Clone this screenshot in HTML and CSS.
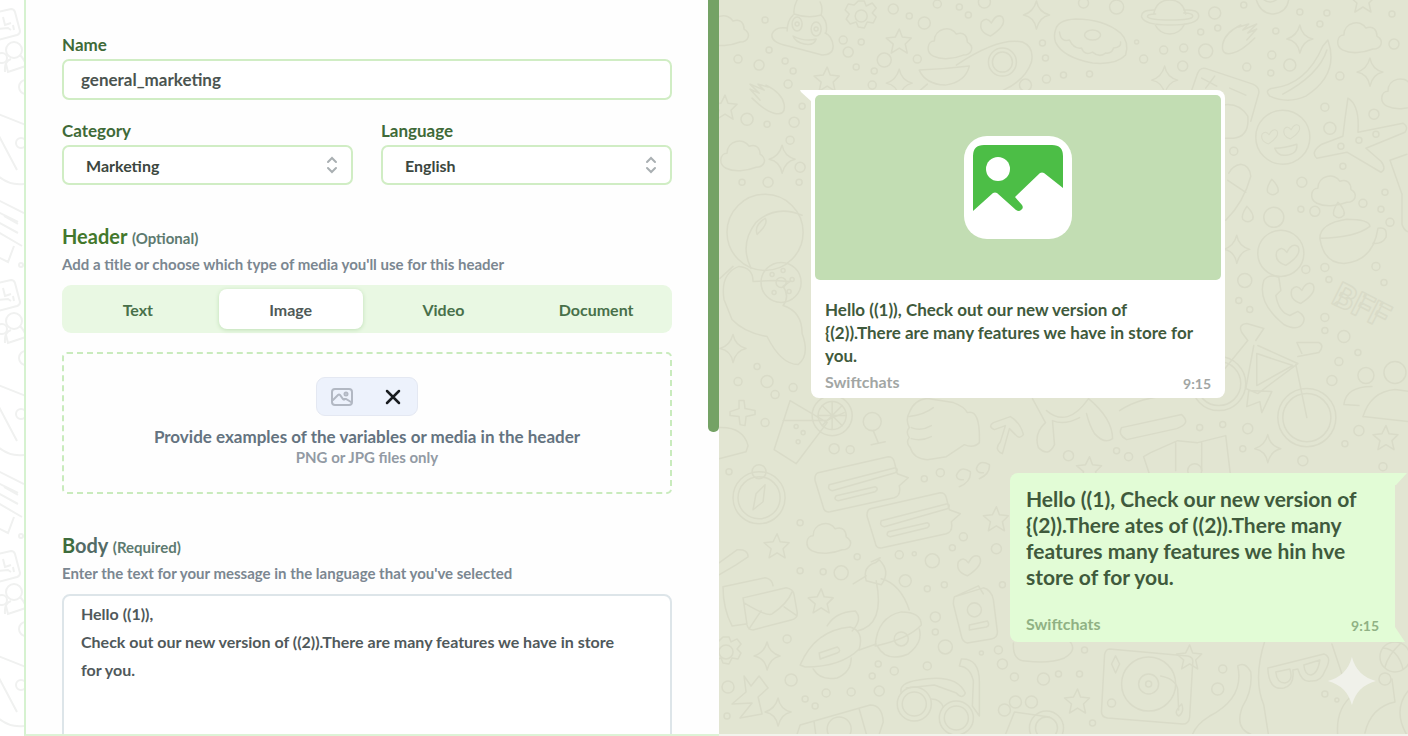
FILE: index.html
```html
<!DOCTYPE html>
<html lang="en">
<head>
<meta charset="utf-8">
<meta name="viewport" content="width=device-width, initial-scale=1">
<title>Message template</title>
<link rel="stylesheet" href="styles.css">
</head>
<body>
<main class="page">
  <div class="strip" aria-hidden="true">
    <svg class="strip-art" viewBox="0 0 24 736" preserveAspectRatio="xMinYMin slice">
      <defs>
        <g id="edge">
          <path d="M-2 12l13-3q3 0 4 3l5 19q0 3-3 4l-19 5M3 17l2 8 6-2M-2 29l10-1 3 2M13 25l1 5"/>
          <circle cx="14" cy="50" r="8"/><circle cx="2" cy="58" r="5"/>
          <path d="M5 72q-1-11 6-13M20 55q5 5 6 11l-18 6-2-8"/>
          <circle cx="26" cy="87" r="7"/>
          <path d="M-2 114l28 11M-2 134l19 36M-2 176q12 10 26 8M-2 200l26 13M-2 212l20 10M4 216l14 8M-2 222l20 11M-2 232l24 14M14 246l-6 16-10-5"/>
          <circle cx="21" cy="143" r="5"/><circle cx="21" cy="265" r="2"/>
        </g>
      </defs>
      <g class="edge-lines">
        <use href="#edge"/><use href="#edge" y="271"/><use href="#edge" y="542"/>
      </g>
    </svg>
  </div>

  <section class="editor">
    <form class="form">
      <div class="field">
        <label class="label" for="name">Name</label>
        <input class="control" id="name" type="text" value="general_marketing">
      </div>
      <div class="pair">
        <div class="field">
          <label class="label" for="category">Category</label>
          <div class="picker">
            <select class="control select" id="category"><option>Marketing</option></select>
            <svg class="arrows" viewBox="0 0 12 18" aria-hidden="true"><path d="M2 6l4-4 4 4M2 12l4 4 4-4"/></svg>
          </div>
        </div>
        <div class="field">
          <label class="label" for="language">Language</label>
          <div class="picker">
            <select class="control select" id="language"><option>English</option></select>
            <svg class="arrows" viewBox="0 0 12 18" aria-hidden="true"><path d="M2 6l4-4 4 4M2 12l4 4 4-4"/></svg>
          </div>
        </div>
      </div>

      <section class="group">
        <h2 class="heading">Header <small class="note">(Optional)</small></h2>
        <p class="hint">Add a title or choose which type of media you'll use for this header</p>
        <div class="tabs">
          <button class="tab" type="button">Text</button>
          <button class="tab tab-on" type="button" aria-pressed="true">Image</button>
          <button class="tab" type="button">Video</button>
          <button class="tab" type="button">Document</button>
        </div>
        <div class="drop">
          <div class="chip">
            <svg class="chip-image" viewBox="0 0 24 20" aria-hidden="true"><rect x="2" y="2" width="20" height="16" rx="3"/><path d="M3 13l5-5q1-1 2 0l3 4q1 1 2 0M14 12h2l5 3"/><circle cx="16" cy="7" r="1.5"/></svg>
            <button class="chip-close" type="button" aria-label="Remove"><svg class="cross" viewBox="0 0 16 16" aria-hidden="true"><path d="M2 2l12 12M14 2L2 14"/></svg></button>
          </div>
          <p class="drop-title">Provide examples of the variables or media in the header</p>
          <p class="drop-note">PNG or JPG files only</p>
        </div>
      </section>

      <section class="group">
        <h2 class="heading heading-body"><span class="initial">B</span>ody <small class="note">(Required)</small></h2>
        <label class="hint" for="body">Enter the text for your message in the language that you've selected</label>
        <textarea class="message" id="body">Hello ((1)),
Check out our new version of ((2)).There are many features we have in store
for you.</textarea>
      </section>
    </form>
    <div class="track"><div class="thumb"></div></div>
  </section>

  <section class="preview">
    <svg class="wall" viewBox="720 0 688 736" preserveAspectRatio="xMinYMin slice" aria-hidden="true">
      <defs>
        <path id="star" d="M0-12l3 8 9 1-6 6 2 9-8-5-8 5 2-9-7-6 9-1z"/>
        <path id="spark" d="M0-14Q2-3 13 0 3 2 0 14-2 2-13 0-3-3 0-14z"/>
        <path id="cloud" d="M-17 13c-8-4-6-15 1-15 0-13 17-16 22-7 8-3 11 3 11 8 8 5 4 13-4 13-10 4-22 5-30 1z"/>
        <path id="heart" d="M-2 11q-12-4-9-14 5-6 10 1 5-10 11-6 5 8-12 19z"/>
        <path id="drop" d="M-1-8q8 8 6 13-5 5-10 0-2-4 4-13z"/>
        <path id="gear" d="M-3-15h6l2 5 6-3 4 5-4 5 4 4-3 6-6-1-3 6-6-1-2-5-6 2-4-5 3-5-4-4 3-6 6 1z"/>
        <path id="comet" d="M-19 8q-2 12 10 9 9-2 22-15M-19 8q2-11 18-19M-3-9l10-3-6 6 14-6-9 9 9-4-10 11"/>
        <path id="note" d="M-38-10l70-16q5 0 6 5l3 12 11 4-9 8q2 10-5 12l-64 14q-6 1-7-5l-8-26q-1-6 3-8zM-27 2l66-17q4 2 0 5L-24 8q-5-1-3-6zM-20 13l39-9q4 2 0 5l-37 9q-5-1-2-5z"/>
      </defs>
      <g class="doodles">
        <use href="#cloud" x="728" y="30"/><use href="#cloud" x="951" y="43"/><use href="#cloud" x="744" y="155"/><use href="#cloud" x="1360" y="37"/><use href="#cloud" x="1404" y="93"/><use href="#cloud" x="1334" y="190"/><use href="#cloud" x="830" y="537"/>
        <use href="#gear" x="862" y="16"/><use href="#gear" x="727" y="651"/>
        <use href="#heart" x="993" y="25"/><use href="#heart" x="970" y="564"/><use href="#heart" x="1303" y="292"/>
        <use href="#star" x="900" y="41"/><use href="#star" x="828" y="79"/><use href="#star" x="726" y="107"/><use href="#star" x="1363" y="0"/><use href="#star" x="1386" y="437"/><use href="#star" x="1090" y="468"/><use href="#star" x="778" y="545"/><use href="#star" x="997" y="518"/><use href="#star" x="822" y="600"/><use href="#star" x="1190" y="656"/><use href="#star" x="1078" y="700"/>
        <use href="#spark" x="1037" y="15"/><use href="#spark" x="900" y="83"/><use href="#spark" x="783" y="159"/><use href="#spark" x="1300" y="39"/><use href="#spark" x="1370" y="72"/><use href="#spark" x="1165" y="80"/><use href="#spark" x="734" y="348"/><use href="#spark" x="1237" y="249"/><use href="#spark" x="1268" y="448"/><use href="#spark" x="768" y="655"/><use href="#spark" x="779" y="711"/>
        <use href="#comet" x="1242" y="36"/><use href="#comet" transform="translate(766 96) scale(-1 1)"/>
        <use href="#drop" x="1273" y="187"/><use href="#drop" x="1248" y="214"/><use href="#drop" x="1339" y="210"/>
        <use href="#note" x="857" y="482"/><use href="#note" x="909" y="518"/>

        <path d="M798 0q-4 8-3 14M821 2q3 6 1 13M795 14q14 5 27 1M794 15q-6 6-6 16M822 15q7 7 5 17M788 28q-12-2-15 6-2 8 16 12l34 9q11 0 11-9-1-10-8-13M794 36q12 6 23 3-2 7-12 5-9-2-11-8z"/>
        <ellipse cx="798" cy="24" rx="5" ry="7"/><ellipse cx="817" cy="29" rx="5" ry="7"/><circle cx="798" cy="24" r="2"/><circle cx="817" cy="29" r="2"/><circle cx="862" cy="16" r="6"/><circle cx="727" cy="651" r="7"/>
        <path d="M957 65q42-28 66-23 12 5 9 20-6 18-28 28M920 70q26-1 50-4-4 16-24 19-20-1-26-15M928 84l-8 7"/><circle cx="1003" cy="62" r="14"/><circle cx="1003" cy="62" r="10"/>
        <circle cx="766" cy="232" r="38"/><path d="M752 268q-12-24 5-46 20-18 46-7M758 234q-3-9 8-16 4 5-8 16z"/>
        <path d="M1056 30q2-10 20-11 28 0 45 14 9 9 5 22-9 10-33 8-30-6-37-21-2-6 0-12zM1060 32q1 10 10 8 4 9 12 8 3 8 11 4 7 6 13 1 6 1 8-5 8-1 7-6"/><ellipse cx="1093" cy="35" rx="8" ry="5"/>
        <path d="M1154 14q3-14 16-14t16 14M1155 24q5 10 15 10t15-10M1154 10q-13 0-12 7 3 8 28 8 29 0 29-9 0-7-15-6M1156 14q-9 0-8 3 3 3 22 3 24 0 23-4 0-3-9-3"/>
        <path d="M1256-2q4 16 18 16 14-2 15-16M1262-2q8 8 17 0"/>
        <path d="M1328 40q12 34-22 56-18 8-36 0-6-6 3-8 33-3 50-42zM1327 50q-8 25-44 44M1192 90l6-17q3-7 10-4l45 15q7 3 6 9l-8 28M1218 106q20-6 30 10 2 20-14 22h-10M1202 78l15 8M1215 76l-9 12M1230 88l16 7"/>
        <circle cx="1283" cy="137" r="27"/><path d="M1275 148q9 0 22-4 1 10-11 11-8 1-11-7z"/><use href="#heart" transform="translate(1270 136) scale(.7)"/><use href="#heart" transform="translate(1292 131) scale(.7)"/>
        <path d="M1348 98q-3 20-5 38l-21 8q-12 8-5 14l30-6 34 20q6-3 0-11l-15-13 39-16q4-5-2-9l-45 9q2-27-10-34zM1390 160l17-6M1390 160l12 34v30q2 7 8 8M1226 220q18-18 25-44-1-11-10-12-8 1-12 9M1228 180l18 12M1320 238q0-15 27-19 22 0 23 7-14 11-50 12q4 25 24 25 29-2 34-35 10-2 8 9-4 7-13 6"/>
        <circle cx="1274" cy="217" r="10"/><circle cx="1281" cy="253" r="23"/><use href="#heart" x="1288" y="254"/>

        <path d="M740 266q-19 7-15 33l8 20q12 13 35 17 14 28 31 28 12-9 4-31 0-22-19-28 7-9 0-19l7-5-16-1-21 1q0-14-14-15M721 278l13-12"/><circle cx="782" cy="282" r="20"/><circle cx="782" cy="282" r="5"/><circle cx="773" cy="274" r="2"/><circle cx="784" cy="270" r="2"/><circle cx="793" cy="279" r="2"/><circle cx="790" cy="291" r="2"/><circle cx="775" cy="292" r="2"/>
        <path d="M740 400h5l1 8 10 2v4l-9 2-1 9-5-1-1-8-9-1v-4l9-3zM720 427q24-1 29 18l-2 6-27 7M791 400l-16 49 22 14 31-41zM784 420h43l18-8"/><circle cx="797" cy="426" r="2"/><circle cx="804" cy="432" r="2"/><circle cx="799" cy="441" r="2"/>
        <circle cx="833" cy="415" r="20"/><circle cx="833" cy="415" r="14"/><path d="M833 401v28M819 415h28M823 405l20 20M823 425l20-20"/>
        <circle cx="873" cy="421" r="9"/><path d="M874 430l5 12M872 444l14-3M910 412q5-13 18-14l26 4q11 4 14 10 13-4 12 30-6 6-15 2l-18 12-19 3q-14-1-17-12-5-5-1-10-4-6 0-10-4-8 0-15zM910 416q15-2 24-9M912 427q10 4 20-2M912 438q10 3 20-2M1003 453q-9-4-2-12l5-16-11 4q-7-3-1-7l17-6q10 6 13 18-4 5-8 0l-6-6zM1033 398l13 24q-12 11-7 25 10 10 16-3l-2-24q12 5 27-3M1047 410q21 18 42-12M1089 398q24 20 24 40-8 6-18-5-5-8-8-20M1120 410q22-14 50-14M1122 427l60-13q10 9-5 14l-50 11q-9-5-5-12M1151 452l27-12 20 2 28-7 5 42-80 0-7-21zM1176 442v28M1202 442v28"/><circle cx="1195" cy="470" r="7"/>

        <path d="M1264 280q5-7 15-3l2 13-5 5q3 17 14 20l8-4q9 5 5 12-5 8-19 1-27-22-20-44zM1307 417l-11-53M1213 383l35-43-6-8q-4-8 5-9l17 5-8 12M1258 345l40 18-40 30-12-5 8-43M1257 353v32l36-20zM1249 390l-2 16 13-5 2 11 10-21zM1298 356l21-4q6-7 0-10h-22l5 11"/>
        <circle cx="1307" cy="417" r="29"/><circle cx="1307" cy="417" r="24"/><circle cx="1219" cy="383" r="27"/><circle cx="1219" cy="383" r="22"/>
        <text class="bff" x="1330" y="302" transform="rotate(27 1330 302)">BFF</text>
        <circle cx="1366" cy="375" r="8"/><circle cx="1395" cy="372" r="11"/><path d="M1363 416q8-25 32-27l15 2M1363 416l47 5M1344 404q2-18 28-18M1344 404l15 1"/>

        <circle cx="760" cy="497" r="26"/><circle cx="760" cy="497" r="21"/><circle cx="760" cy="471" r="7"/><path d="M766 484l-2 17-10 8 3-16zM960 486q12-5 11-15-10-7-14 4 1 5 7 4M980 478q11-5 10-14-10-6-13 4 1 5 7 4M720 562l18-13q11-1 11 7l-12 8-17 10M724 586l42-9q7 1 8 8M724 586q0 22 9 39l14-2M744 597l43-10q7 1 8 7l3 17q1 7-6 8l-38 10q-5 0-6-5zM745 602q23 14 28 11 15-10 20-22M750 628l12-18M798 615l-13-9"/>
        <path d="M801 664q15-35 50-38 14 4 9 22-18 18-54 18zM820 652l18-6q5 4 0 6l-17 6zM828 625q8-14 28-15 8 8-3 20M877 580q9 44-19 50M882 578q19 5 28 31M876 645q2-29 26-34 20 0 20 13-13 14-46 21M860 649l17-6M876 562q-13 4-9 18l15 4q10-13-2-25zM867 575l-13 8M872 561l9-4"/><path d="M814 668q7 12 24 9 14-6 14-20M878 645q9 17 31 8 15-12 11-25"/><circle cx="902" cy="638" r="7"/>
        <path d="M955 596l29-9q8 2 10 12l4 32q0 6-6 7l-24 4q-5-1-6-7l-8-32q0-4 1-7l24-11 5 8"/><circle cx="975" cy="609" r="7"/><path d="M970 624l18-4q3 5-1 6l-17 3z"/>
        <circle cx="915" cy="703" r="17"/><circle cx="915" cy="703" r="12"/><circle cx="957" cy="717" r="17"/><circle cx="957" cy="717" r="12"/><path d="M902 692q-3-10 17-13 38-7 47 13-3 7-9 0l-22-8-28 3M932 698q9 0 12 8M962 658q18-1 18 23v34l-7-10 1-25q-3-14-14-15zM797 736l4-12 70-20q12 0 13 17l-5 15M815 721l2 15M860 708l8 28"/><circle cx="840" cy="728" r="12"/>
        <path d="M745 675l7 10 8-10 9 12-10 9 4 17-22 4 12-15-20 1 14-12zM1005 736l10-25 35 5"/><circle cx="1005" cy="709" r="6"/><circle cx="1016" cy="701" r="6"/><circle cx="1032" cy="701" r="6"/><circle cx="1047" cy="727" r="17"/><circle cx="1047" cy="727" r="11"/>
        <path d="M1014 642q-1 18 12 18 24 3 39-3 14-8 4-18M1110 648l78 7q6 1 5 7l-3 54q-1 7-7 7l-75-6q-7-1-6-8l3-55q1-6 5-6zM1112 663l4-8 4 8-4 9zM1161 675q15 3 17 13l1 21M1182 703q-9 9-3 12 6-4 3-12"/><circle cx="1149" cy="683" r="27"/><circle cx="1149" cy="683" r="10"/><circle cx="1149" cy="683" r="3"/>
        <path d="M1192 736q3-12 18-21 35-18 28-50 7-5 13 6 2 18-8 34-12 30 24 31M1265 640q-12 38-1 64l5 32M1268 667l56-14q9 3 1 17-4 11-14 10-9 2-13-12l-5 1q2 15-9 18-15 3-16-20zM1276 671l14-3q4 12-5 14-8 0-9-11zM1304 664l16-5q-2 14-9 15-6 0-7-10zM1332 643l10 30M1338 736q-3-28 15-42M1365 732q6-26 30-31l-3-23M1408 690q-16 20 0 46"/><circle cx="1395" cy="656" r="15"/><path d="M1383 647q15 1 20 21M1401 642q-13 12-16 24"/>
      </g>
      <g class="doodles" id="bubbles"></g>
      <path class="glint" d="M1352 656Q1357 675 1376 680 1357 685 1352 704 1347 685 1328 680 1347 675 1352 656z"/>
    </svg>

    <div class="chat">
      <article class="bubble bubble-in">
        <svg class="tail tail-in" viewBox="0 0 12 12" aria-hidden="true"><path d="M0 0h12v12L1 2z"/></svg>
        <div class="media">
          <svg class="photo" viewBox="0 0 108 103" role="img" aria-label="Image"><rect class="photo-card" width="108" height="103" rx="23"/><path class="photo-scene" d="M9 75V20Q9 9 20 9h68q11 0 11 11v32L80 37q-2-1-4 0L51 61l7 8q2 3-1 5-2 2-5 0L33 57q-2-1-4 0z"/><circle class="photo-card" cx="34" cy="33" r="12"/></svg>
        </div>
        <p class="text">Hello ((1)), Check out our new version of<br>{(2)).There are many features we have in store for<br>you.</p>
        <footer class="meta"><span>Swiftchats</span><time class="time">9:15</time></footer>
      </article>

      <article class="bubble bubble-out">
        <svg class="tail tail-out-top" viewBox="0 0 13 13" aria-hidden="true"><path d="M0 0h12L1 12H0z"/></svg>
        <svg class="tail tail-out-bottom" viewBox="0 0 13 15" aria-hidden="true"><path d="M0 0l10 15H0z"/></svg>
        <p class="text text-large">Hello ((1), Check our new version of<br>{(2)).There ates of ((2)).There many<br>features many features we hin hve<br>store of for you.</p>
        <footer class="meta meta-out"><span>Swiftchats</span><time class="time">9:15</time></footer>
      </article>
    </div>
  </section>
</main>
<script src="bubbles.js"></script>
</body>
</html>
```
FILE: bubbles.js
```js
// Small rings scattered between the larger doodles: x, y, radius.
const rings = [
  [766,20,3],[894,9,5],[910,16,3],[925,23,6],[938,4,4],[960,7,3],[969,15,3],[985,2,6],[844,40,4],[862,42,3],[849,52,5],
  [770,50,3],[739,59,4],[760,65,5],[786,61,3],[794,71,3],[789,84,4],[857,67,3],[875,71,3],[885,60,7],[918,59,4],[873,85,4],
  [1043,43,3],[1046,58,3],[1047,79,4],[1026,85,6],[748,119,6],[768,124,3],[795,122,5],[791,140,4],[801,167,5],[769,182,5],
  [743,182,3],[800,182,3],[803,106,3],[1084,3,5],[1117,7,7],[1215,13,6],[1244,5,3],[1300,12,3],[1327,13,3],[1392,14,3],
  [1320,24,3],[1201,32,3],[1218,28,3],[1276,31,3],[1394,44,5],[1137,42,2],[1164,50,4],[1184,48,4],[1206,51,7],[1144,59,4],
  [1183,66,5],[1272,55,4],[1290,65,6],[1247,67,4],[1271,73,3],[1340,76,4],[1064,75,3],[1090,74,3],[1325,107,4],[1330,128,6],
  [1374,114,5],[1359,140,3],[1341,146,3],[1376,134,3],[1234,151,4],[1343,166,3],[1302,182,5],[1385,192,3],[1363,203,4],
  [1301,209,3],[1315,211,5],[1381,209,3],[1390,222,4],[758,366,3],[739,381,4],[768,381,6],[776,394,4],[794,387,4],[766,422,4],
  [835,448,5],[851,449,4],[730,471,3],[925,478,3],[941,472,4],[1245,280,7],[1306,269,4],[1325,267,4],[1329,279,3],[1376,266,4],
  [1384,282,3],[1239,300,3],[1250,309,3],[1325,317,4],[1325,330,3],[1344,336,6],[1358,352,3],[1339,361,4],[1332,380,5],
  [1248,428,5],[1223,424,3],[1200,427,3],[1359,430,5],[1345,443,3],[1303,460,5],[1383,466,4],[1243,448,3],[1069,455,5],
  [1117,450,3],[1129,456,4],[801,522,3],[801,570,3],[824,571,3],[842,572,7],[858,556,3],[900,554,4],[915,553,2],[933,560,7],
  [906,580,6],[928,588,3],[945,584,3],[953,547,3],[964,536,4],[997,548,5],[1003,584,3],[936,616,5],[936,631,3],[946,646,7],
  [788,638,4],[792,679,6],[806,698,3],[827,692,4],[852,691,4],[880,690,5],[879,663,3],[895,670,4],[928,665,4],[873,675,3],
  [1003,663,5],[999,649,4],[982,652,2],[1015,676,4],[1044,678,6],[1059,673,3],[729,686,6],[728,715,3],[816,705,3],
  [1223,668,4],[1218,688,6],[1112,702,4],[1080,673,3],[1085,649,3],[1093,722,3],[1385,678,6],[1325,693,3],[1337,699,2]
];
const layer = document.getElementById("bubbles");
for (const [x, y, r] of rings) {
  const c = document.createElementNS("http://www.w3.org/2000/svg", "circle");
  c.setAttribute("cx", x);
  c.setAttribute("cy", y);
  c.setAttribute("r", r);
  layer.append(c);
}
```
FILE: styles.css
```css
* { box-sizing: border-box; }
body { margin: 0; font-family: Lato, "Open Sans", sans-serif; font-weight: 700; color: #4b5450; }
h2, p { margin: 0; }
button, input, select, textarea { font: inherit; color: inherit; }

.page { display: grid; grid-template-columns: 24px minmax(0, 695fr) minmax(0, 689fr); height: 100vh; overflow: hidden; background: #fff; }
.strip { overflow: hidden; }
.strip-art { display: block; width: 24px; height: 100%; }
.edge-lines { fill: none; stroke: #f0f1f0; stroke-width: 2; }

.editor { display: grid; grid-template-columns: minmax(0, 1fr) 11px; min-height: 0; overflow: hidden; background: #fefefe; border-left: 2px solid #d6f2d0; border-bottom: 2px solid #ddf3d6; }
.form { padding: 35px 36px 0; }
.track { display: flex; }
.thumb { width: 11px; height: 432px; background: #74a265; border-radius: 0 0 5px 5px; }

.field { display: grid; gap: 4px; }
.label { font-size: 17px; line-height: 20px; color: #3f6a38; }
.control { width: 100%; height: 41px; padding: 0 17px; font-size: 17px; background: #fff; border: 2px solid #d0edc4; border-radius: 7px; outline: 0; }
.pair { display: grid; grid-template-columns: 1fr 1fr; gap: 28px; margin-top: 21px; }
.picker { display: grid; align-items: center; }
.picker > * { grid-area: 1 / 1; }
.select { appearance: none; height: 40px; padding: 0 22px; font-size: 16px; color: #3c4740; }
.arrows { width: 12px; height: 18px; justify-self: end; margin-right: 15px; pointer-events: none; fill: none; stroke: #a9afb2; stroke-width: 2; stroke-linecap: round; }

.group { margin-top: 37px; }
.heading { font-size: 20px; line-height: 28px; color: #43782c; }
.heading-body { color: #536b66; }
.initial { color: #3e6c3c; }
.note { font-size: 15px; color: #5d7a70; }
.hint { display: block; margin-top: 1px; font-size: 15px; line-height: 22px; color: #7b8791; }
.tabs { display: grid; grid-template-columns: repeat(4, 1fr); gap: 9px; margin-top: 10px; padding: 4px; background: #e9f8e3; border-radius: 9px; }
.tab { height: 40px; padding: 0; font-size: 16px; color: #48704a; background: none; border: 0; border-radius: 8px; }
.tab-on { color: #4f5a58; background: #fff; box-shadow: 0 1px 4px #bfe0b6; }
.drop { display: grid; justify-items: center; margin-top: 19px; padding: 23px 16px 26px; border: 2px dashed #c9ebbd; border-radius: 5px; }
.chip { display: flex; align-items: center; gap: 28px; height: 39px; padding: 0 13px 0 13px; background: #edf2fc; border: 1px solid #e4e8f2; border-radius: 9px; }
.chip-image { width: 24px; height: 20px; fill: none; stroke: #b2b8c3; stroke-width: 2; stroke-linecap: round; }
.chip-close { display: flex; width: 22px; padding: 3px; background: none; border: 0; }
.cross { width: 16px; height: 16px; fill: none; stroke: #191c20; stroke-width: 2.5; stroke-linecap: round; }
.drop-title { margin-top: 10px; font-size: 17px; line-height: 22px; color: #647380; }
.drop-note { font-size: 15px; line-height: 18px; color: #929aa4; }
.message { display: block; width: 100%; height: 180px; margin-top: 10px; padding: 4px 17px; font-size: 16px; line-height: 28px; color: #50595b; background: #fff; border: 2px solid #dde5e9; border-radius: 8px; outline: 0; resize: none; }

.preview { position: relative; overflow: hidden; background: #e2e5d2; border-bottom: 2px solid #f2f3ec; }
.wall { position: absolute; inset: 0; width: 100%; height: 100%; }
.doodles { fill: none; stroke: #d9dbc8; stroke-width: 1.5; stroke-linejoin: round; stroke-linecap: round; }
.bff { font: 700 34px Roboto, sans-serif; }
.glint { fill: #f0f1ea; }

.chat { position: relative; display: flex; flex-direction: column; gap: 75px; padding: 90px 13px 0 92px; }
.bubble { position: relative; }
.bubble-in { align-self: flex-start; width: 414px; padding: 5px 4px 2px; background: #fff; border-radius: 0 8px 8px 8px; }
.bubble-out { align-self: flex-end; width: 385px; padding: 13px 16px 4px; background: #e2fcd6; border-radius: 8px 0 0 8px; }
.tail { position: absolute; fill: #e2fcd6; }
.tail-in { top: 0; left: -11px; width: 12px; height: 12px; fill: #fff; }
.tail-out-top { top: 0; left: 100%; width: 13px; height: 13px; }
.tail-out-bottom { bottom: 0; left: 100%; width: 13px; height: 15px; }
.media { display: grid; place-items: center; height: 185px; background: #c2ddb3; border-radius: 5px; }
.photo { width: 108px; height: 103px; }
.photo-card { fill: #fff; }
.photo-scene { fill: #4cbe46; }
.text { padding: 18px 10px 0; font-size: 17px; line-height: 23px; color: #3f5a3c; white-space: nowrap; }
.text-large { padding: 0; font-size: 21px; line-height: 26px; }
.meta { display: flex; justify-content: space-between; padding: 3px 10px 0; font-size: 16px; line-height: 24px; color: #a2a6a4; }
.time { padding-top: 2px; font-size: 14px; }
.meta-out { padding: 22px 0 0; color: #90b184; }
```
